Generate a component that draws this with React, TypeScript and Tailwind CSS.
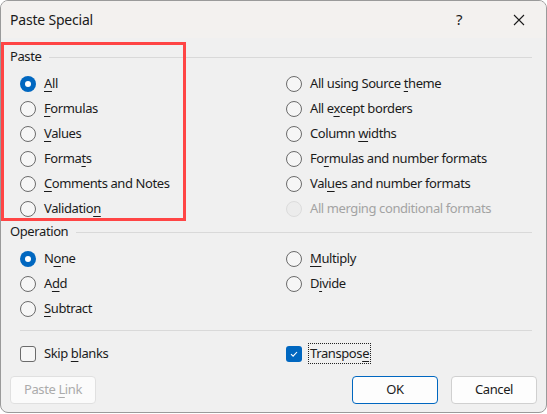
import React from 'react';

type Opt = { label: string; k: number; checked?: boolean; disabled?: boolean };

function Label({ label, k }: { label: string; k: number }) {
  return (
    <span>
      {label.slice(0, k)}
      <span className="underline decoration-1 underline-offset-[3px]">{label[k]}</span>
      {label.slice(k + 1)}
    </span>
  );
}

function Radio({ label, k, checked, disabled }: Opt) {
  return (
    <div className={`h-[25px] flex items-center gap-2 ${disabled ? 'text-[#a3a3a3]' : 'text-[#1b1b1b]'}`}>
      {checked ? (
        <span className="w-4 h-4 rounded-full bg-[#0067c0] flex items-center justify-center">
          <span className="w-[6px] h-[6px] rounded-full bg-white" />
        </span>
      ) : disabled ? (
        <span className="w-4 h-4 rounded-full border border-[#dcdcdc] bg-[#ececec]" />
      ) : (
        <span className="w-4 h-4 rounded-full border border-[#6b6b6b] bg-[#f6f6f6]" />
      )}
      {disabled ? <span>{label}</span> : <Label label={label} k={k} />}
    </div>
  );
}

function Group({ title, children }: { title: string; children: React.ReactNode }) {
  return (
    <div>
      <div className="flex items-center h-5">
        <span className="text-[#1b1b1b]">{title}</span>
        <div className="flex-1 h-px bg-[#d9d9d9] ml-[8px]" />
      </div>
      {children}
    </div>
  );
}

const paste: Opt[] = [
  { label: 'All', k: 0, checked: true },
  { label: 'Formulas', k: 0 },
  { label: 'Values', k: 0 },
  { label: 'Formats', k: 5 },
  { label: 'Comments and Notes', k: 0 },
  { label: 'Validation', k: 9 },
];

const pasteRight: Opt[] = [
  { label: 'All using Source theme', k: 17 },
  { label: 'All except borders', k: 5 },
  { label: 'Column widths', k: 7 },
  { label: 'Formulas and number formats', k: 2 },
  { label: 'Values and number formats', k: 3 },
  { label: 'All merging conditional formats', k: 6, disabled: true },
];

export default function App() {
  return (
    <div className="w-[547px] h-[414px] bg-white" style={{ fontFamily: '"Noto Sans", "Open Sans", sans-serif' }}>
      <div className="relative w-[547px] h-[413px] bg-[#f0f0f0] border border-[#9a9a9a] rounded-lg overflow-hidden flex flex-col text-[13px] tracking-[-0.4px]">
        <div className="h-[37px] shrink-0 bg-[#f3f1ef] flex items-center pl-[9px] pr-[21px]">
          <span className="text-[14px] tracking-[-0.2px] text-[#1b1b1b] flex-1">Paste Special</span>
          <span className="text-[15px] text-[#1b1b1b] mr-[51px]">?</span>
          <svg width="12" height="12" viewBox="0 0 12 12" className="text-[#1b1b1b]">
            <path d="M1 1L11 11M11 1L1 11" stroke="currentColor" strokeWidth="1.1" />
          </svg>
        </div>

        <div className="pl-[9px] pr-[14px] pt-[9px]">
          <Group title="Paste">
            <div className="grid grid-cols-[266px_1fr] pl-[10px] pt-[4px]">
              <div>
                {paste.map((o) => (
                  <Radio key={o.label} {...o} />
                ))}
              </div>
              <div>
                {pasteRight.map((o) => (
                  <Radio key={o.label} {...o} />
                ))}
              </div>
            </div>
          </Group>

          <div className="mt-[1px]">
            <Group title="Operation">
              <div className="grid grid-cols-[266px_1fr] pl-[10px] pt-[4px]">
                <div>
                  <Radio label="None" k={1} checked />
                  <Radio label="Add" k={1} />
                  <Radio label="Subtract" k={0} />
                </div>
                <div>
                  <Radio label="Multiply" k={0} />
                  <Radio label="Divide" k={1} />
                </div>
              </div>
            </Group>
          </div>

          <div className="ml-[10px] mt-[9px] h-px bg-[#d9d9d9]" />

          <div className="grid grid-cols-[266px_1fr] pl-[10px] mt-[12px] h-[16px] items-center">
            <div className="flex items-center gap-2 text-[#1b1b1b]">
              <span className="w-4 h-4 rounded-[3px] border border-[#6b6b6b] bg-[#f6f6f6]" />
              <Label label="Skip blanks" k={5} />
            </div>
            <div className="flex items-center gap-[6px] text-[#1b1b1b]">
              <span className="w-4 h-4 rounded-[3px] bg-[#0067c0] flex items-center justify-center">
                <svg width="10" height="10" viewBox="0 0 10 10">
                  <path d="M2 5.2L4.1 7.2L8 3" fill="none" stroke="white" strokeWidth="1.1" />
                </svg>
              </span>
              <span className="border border-dotted border-[#222] px-[1px] leading-[19px]">
                <Label label="Transpose" k={8} />
              </span>
            </div>
          </div>

          <div className="flex items-center mt-[17px]">
            <div className="w-[86px] h-[28px] rounded-[4px] border border-[#e0e0e0] bg-[#fbfbfb] text-[#ababab] flex items-center justify-center">
              <span>Paste <span className="underline decoration-1 underline-offset-[3px]">L</span>ink</span>
            </div>
            <div className="flex-1" />
            <div className="w-[86px] h-[28px] rounded-[4px] border border-[#0067c0] bg-[#fdfdfd] text-[#1b1b1b] flex items-center justify-center">
              OK
            </div>
            <div className="w-[86px] h-[28px] ml-[13px] mr-[-5px] rounded-[4px] border border-[#d0d0d0] bg-[#fdfdfd] text-[#1b1b1b] flex items-center justify-center">
              Cancel
            </div>
          </div>
        </div>

        <div className="absolute left-0 top-[41px] w-[185px] h-[179px] border-[3px] border-[#ff4545] pointer-events-none" />
      </div>
    </div>
  );
}
